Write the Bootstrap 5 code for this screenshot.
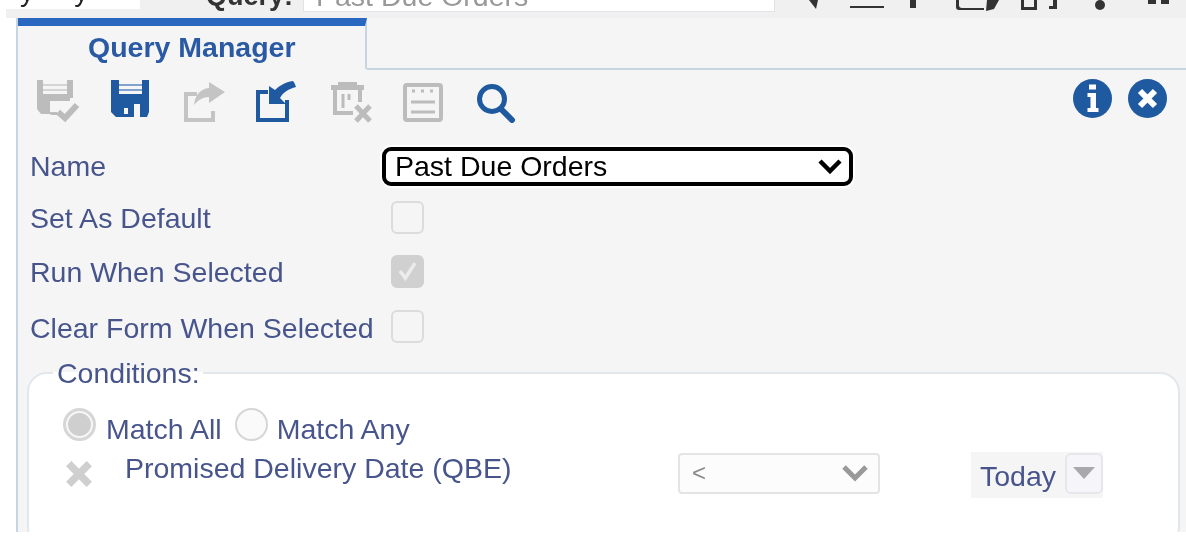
<!DOCTYPE html>
<html lang="en">
<head>
    <meta charset="UTF-8" />
    <title>Query Manager</title>
    <link href="https://cdn.jsdelivr.net/npm/bootstrap@5.3.2/dist/css/bootstrap.min.css" rel="stylesheet" />
    <style>
        html, body { height: 100%; overflow: hidden; background: #fff; }
        body { font-family: "Liberation Sans", Arial, sans-serif; font-size: 28.5px; color: #47558c; }

        .page-wrap { height: 532px; overflow: hidden; filter: blur(.6px); }

        /* cut off header strip */
        .top-strip { height: 18px; margin-left: 6px; background: #f0f0f0; overflow: hidden; align-items: flex-start; }
        .top-left-box { width: 134px; height: 9px; background: #fff; overflow: hidden; color: #222; line-height: 0; padding-left: 14px; gap: 40px; }
        .top-left-box span { margin-top: -9px; }
        .top-query { width: 163px; height: 11px; overflow: hidden; text-align: right; padding-right: 10px; font-size: 27px; font-weight: 700; color: #333; line-height: 0; }
        .top-input { width: 472px; height: 12px; background: #fff; border: 1px solid #e0e3e8; border-top: 0; overflow: hidden; padding-left: 12px; color: #999; line-height: 0; }
        .top-cut { display: block; margin-top: -4px; }
        .top-icons { margin-left: 34px; height: 12px; }

        .qm-panel { margin-left: 16px; height: 514px; overflow: hidden; border-left: 2px solid #c7d4e2; background: #f5f5f5; }
        .qm-tabs { height: 52px; border-bottom: 2px solid #c7d4e2; }
        .qm-tab { width: 349px; height: 52px; border-top: 8px solid #2a67c0; border-right: 2px solid #c7d4e2; border-bottom: 2px solid #f5f5f5; font-weight: 700; color: #2a5aa3; padding-left: 70px; line-height: 42px; }

        .tool-row { padding: 9px 19px 0 18px; height: 69px; gap: 29px; }
        .tool-row svg { width: 44px; height: 44px; flex: none; }
        .round-btns { gap: 16px; }
        .round-btns svg { width: 39px; height: 39px; }

        .field-row { padding-left: 12px; height: 54px; }
        .field-tight { margin-top: -1px; margin-bottom: 1px; }
        .field-tight .field-label { margin-top: -2px; }
        .field-label { width: 352px; white-space: nowrap; }
        .name-select.form-select { width: 471px; height: 39px; padding: 0 0 0 9px; font-size: 28.5px; line-height: 1; font-family: "Liberation Sans", Arial, sans-serif; color: #000; border: 4px solid #000; border-radius: 9px; background-color: #fff; background-image: url("data:image/svg+xml,%3csvg xmlns='http://www.w3.org/2000/svg' viewBox='0 0 24 16'%3e%3cpath fill='none' stroke='%23000' stroke-width='4.500' d='M2 3l10 10L22 3'/%3e%3c/svg%3e"); background-size: 24px 16px; background-position: right 7px center; box-shadow: 0 0 0 2px #fff; }
        .box-input.form-check-input { width: 33px; height: 33px; margin: -4px 0 0 9px; background-color: #f5f5f5; border: 2px solid #dcdcdc; border-radius: 6px; opacity: 1; }
        .box-input.form-check-input:checked { background-color: #d0d0d0; border-color: #d0d0d0; background-image: url("data:image/svg+xml,%3csvg xmlns='http://www.w3.org/2000/svg' viewBox='0 0 33 33'%3e%3cpath fill='none' stroke='%23ececec' stroke-width='4' d='M8 16l6 8L25 7'/%3e%3c/svg%3e"); background-size: 100% 100%; }

        .cond-box { margin: 2px 6px 0 9px; padding: 0 75px 0 34px; height: 190px; background: #fff; border: 2px solid #e2e7ec; border-radius: 20px; }
        .cond-box legend { float: none; width: auto; margin: 0 0 0 -10px; padding: 0 3px 0 4px; font-size: 28.5px; line-height: 32px; }
        .radio-input.form-check-input { width: 33px; height: 33px; margin: 0; background-color: #fafafa; border: 2px solid #d6d6d6; opacity: 1; flex: none; }
        .radio-input.form-check-input:checked { background-color: #fafafa; border: 3px solid #d6d6d6; background-image: radial-gradient(circle, #cfcfcf 0 11px, #f7f7f7 12px); }
        .match-row { margin-top: 19px; }
        .match-all { margin: 0 13px 0 10px; }
        .match-any { margin-left: 9px; }
        .cond-row { margin-top: -4px; }
        .cond-clear { width: 28px; height: 28px; margin: 13px 32px 0 2px; flex: none; }
        .cond-select.form-select { width: 202px; height: 41px; margin-top: 6px; padding: 0 0 0 12px; font-size: 24px; line-height: 1; font-family: "Liberation Sans", Arial, sans-serif; color: #8a8a8a; background-color: #fcfcfc; background-image: url("data:image/svg+xml,%3csvg xmlns='http://www.w3.org/2000/svg' viewBox='0 0 26 18'%3e%3cpath fill='none' stroke='%23999' stroke-width='5' d='M2 3l11 11L24 3'/%3e%3c/svg%3e"); border: 2px solid #e4e4e4; border-radius: 4px; background-size: 26px 18px; background-position: right 10px center; opacity: 1; }
        .today-box { width: 132px; height: 46px; margin: 5px 0 0 91px; padding-left: 9px; background: #f5f5f5; }
        .today-text { line-height: 48px; }
        .today-drop.btn { width: 38px; height: 41px; margin: 1px 0 0 auto; padding: 0; background: #f6f6fa; border: 2px solid #e6e6ec; border-radius: 6px; opacity: 1; }
        .drop-arrow { display: block; width: 0; height: 0; margin: 0 auto; border-left: 11px solid transparent; border-right: 11px solid transparent; border-top: 12px solid #a9a9ad; }
    </style>
</head>
<body>
<div class="page-wrap">
    <div class="top-strip d-flex">
        <div class="top-left-box d-flex"><span>y</span><span>y</span></div>
        <div class="top-query"><span class="top-cut">Query:</span></div>
        <div class="top-input"><span class="top-cut">Past Due Orders</span></div>
        <svg class="top-icons" width="366" height="12" viewBox="0 0 366 12">
            <g fill="#333">
                <path d="M0 0h9l-2 9z"/>
                <rect x="41" y="6" width="34" height="2"/>
                <rect x="101" y="0" width="6" height="8"/>
                <path d="M150 0v5q0 3 3 3h22v2h-25q-3 0-3-3V0zM178 0h12l-5 9-8 2z"/>
                <path d="M212 0h3v7h10v-7h3v10h-16zM236 0h12v9h-8v-3h4V0z"/>
                <circle cx="291" cy="5" r="5"/>
                <rect x="339" y="0" width="8" height="4"/><rect x="352" y="0" width="8" height="4"/>
            </g>
        </svg>
    </div>

    <div class="qm-panel">
        <div class="qm-tabs">
            <div class="qm-tab">Query Manager</div>
        </div>

        <div class="tool-row d-flex align-items-start">
            <!-- save and check, disabled -->
            <svg viewBox="0 0 44 44">
                <path fill="#bcbcbc" d="M1 1h6v14h24V1h6v18h-3v3H14v11h7v3h-5l-3-1H5l-4-5z"/>
                <path fill="#d4d4d4" d="M7 5h24v2H7zM7 10h24v2H7z"/>
                <path fill="none" stroke="#bcbcbc" stroke-width="6" d="M22 33l7 6 12-13"/>
            </svg>
            <!-- save -->
            <svg viewBox="0 0 44 44">
                <path fill="#1f5aa0" d="M2 1h8v14h23V1h7v32l-2 5h-7V25H15v13H7l-5-5z"/>
                <path fill="#7fa2cf" d="M10 5h23v2H10zM10 10h23v2H10z"/>
                <rect x="15" y="25" width="10" height="13" fill="#1f5aa0"/>
                <rect x="15" y="29" width="4" height="6" fill="#f5f5f5"/>
            </svg>
            <!-- share, disabled -->
            <svg viewBox="0 0 44 44">
                <path fill="none" stroke="#c4c4c4" stroke-width="4" d="M15 15H4v26h27v-9"/>
                <path fill="#c4c4c4" d="M43 13L27 3v6c-9 1-14 7-15 17 4-5 9-8 15-8v6z"/>
            </svg>
            <!-- load -->
            <svg viewBox="0 0 44 44">
                <path fill="none" stroke="#1f5aa0" stroke-width="4" d="M13 13H3v28h29V21"/>
                <path fill="#1f5aa0" d="M14 7v18h17l-6-6c3-6 9-9 16-11-1-3-2-5-3-6-8 1-14 5-18 9z"/>
            </svg>
            <!-- delete, disabled -->
            <svg viewBox="0 0 44 44">
                <path fill="#bcbcbc" d="M10 3h19v3h7v5H3V6h7z"/>
                <path fill="none" stroke="#bcbcbc" stroke-width="4" d="M7 11v23h18M32 11v12"/>
                <path fill="none" stroke="#bcbcbc" stroke-width="3" d="M15 15v14M21 15v6"/>
                <path fill="none" stroke="#bcbcbc" stroke-width="5" d="M28 27l14 15M42 27L28 42"/>
            </svg>
            <!-- notes, disabled -->
            <svg viewBox="0 0 44 44">
                <rect x="4" y="6" width="36" height="35" rx="2" fill="none" stroke="#bcbcbc" stroke-width="4"/>
                <path fill="none" stroke="#bcbcbc" stroke-width="3" d="M10 23h24M10 33h24"/>
                <path fill="none" stroke="#bcbcbc" stroke-width="3" stroke-dasharray="3 6" d="M11 12h22"/>
            </svg>
            <!-- search -->
            <svg viewBox="0 0 44 44">
                <circle cx="18" cy="20" r="12.500" fill="none" stroke="#1f5aa0" stroke-width="5"/>
                <path stroke="#1f5aa0" stroke-width="6" stroke-linecap="round" d="M28 31l10 10"/>
            </svg>

            <div class="round-btns d-flex ms-auto">
                <svg viewBox="0 0 39 39">
                    <circle cx="19.500" cy="19.500" r="19.500" fill="#1f5aa0"/>
                    <path fill="#fff" d="M16 5.500h7v5h-7zM14.500 14h8.500v15h2.500v4h-11v-4h3V18h-3z"/>
                </svg>
                <svg viewBox="0 0 39 39">
                    <circle cx="19.500" cy="19.500" r="19.500" fill="#1f5aa0"/>
                    <path stroke="#fff" stroke-width="6" d="M12 12l15 15M27 12L12 27"/>
                </svg>
            </div>
        </div>

        <div class="field-row d-flex align-items-center">
            <div class="field-label">Name</div>
            <select class="name-select form-select"><option>Past Due Orders</option></select>
        </div>
        <div class="field-row field-tight d-flex align-items-center">
            <div class="field-label">Set As Default</div>
            <input class="box-input form-check-input" type="checkbox" disabled>
        </div>
        <div class="field-row field-tight d-flex align-items-center">
            <div class="field-label">Run When Selected</div>
            <input class="box-input form-check-input" type="checkbox" checked disabled>
        </div>
        <div class="field-row d-flex align-items-center">
            <div class="field-label">Clear Form When Selected</div>
            <input class="box-input form-check-input" type="checkbox" disabled>
        </div>

        <fieldset class="cond-box">
            <legend>Conditions:</legend>
            <div class="match-row d-flex align-items-start">
                <input class="radio-input form-check-input" type="radio" name="match" checked disabled>
                <span class="match-all">Match All</span>
                <input class="radio-input form-check-input" type="radio" name="match" disabled>
                <span class="match-any">Match Any</span>
            </div>
            <div class="cond-row d-flex align-items-start">
                <svg class="cond-clear" viewBox="0 0 30 30">
                    <path stroke="#cfcfcf" stroke-width="8" d="M4 4l22 22M26 4L4 26"/>
                </svg>
                <div class="me-auto text-nowrap">Promised Delivery Date (QBE)</div>
                <select class="cond-select form-select" disabled><option>&lt;</option></select>
                <div class="today-box d-flex align-items-start">
                    <span class="today-text">Today</span>
                    <button class="today-drop btn" type="button" disabled><span class="drop-arrow"></span></button>
                </div>
            </div>
        </fieldset>
    </div>
</div>
<script src="https://cdn.jsdelivr.net/npm/bootstrap@5.3.2/dist/js/bootstrap.bundle.min.js"></script>
</body>
</html>
